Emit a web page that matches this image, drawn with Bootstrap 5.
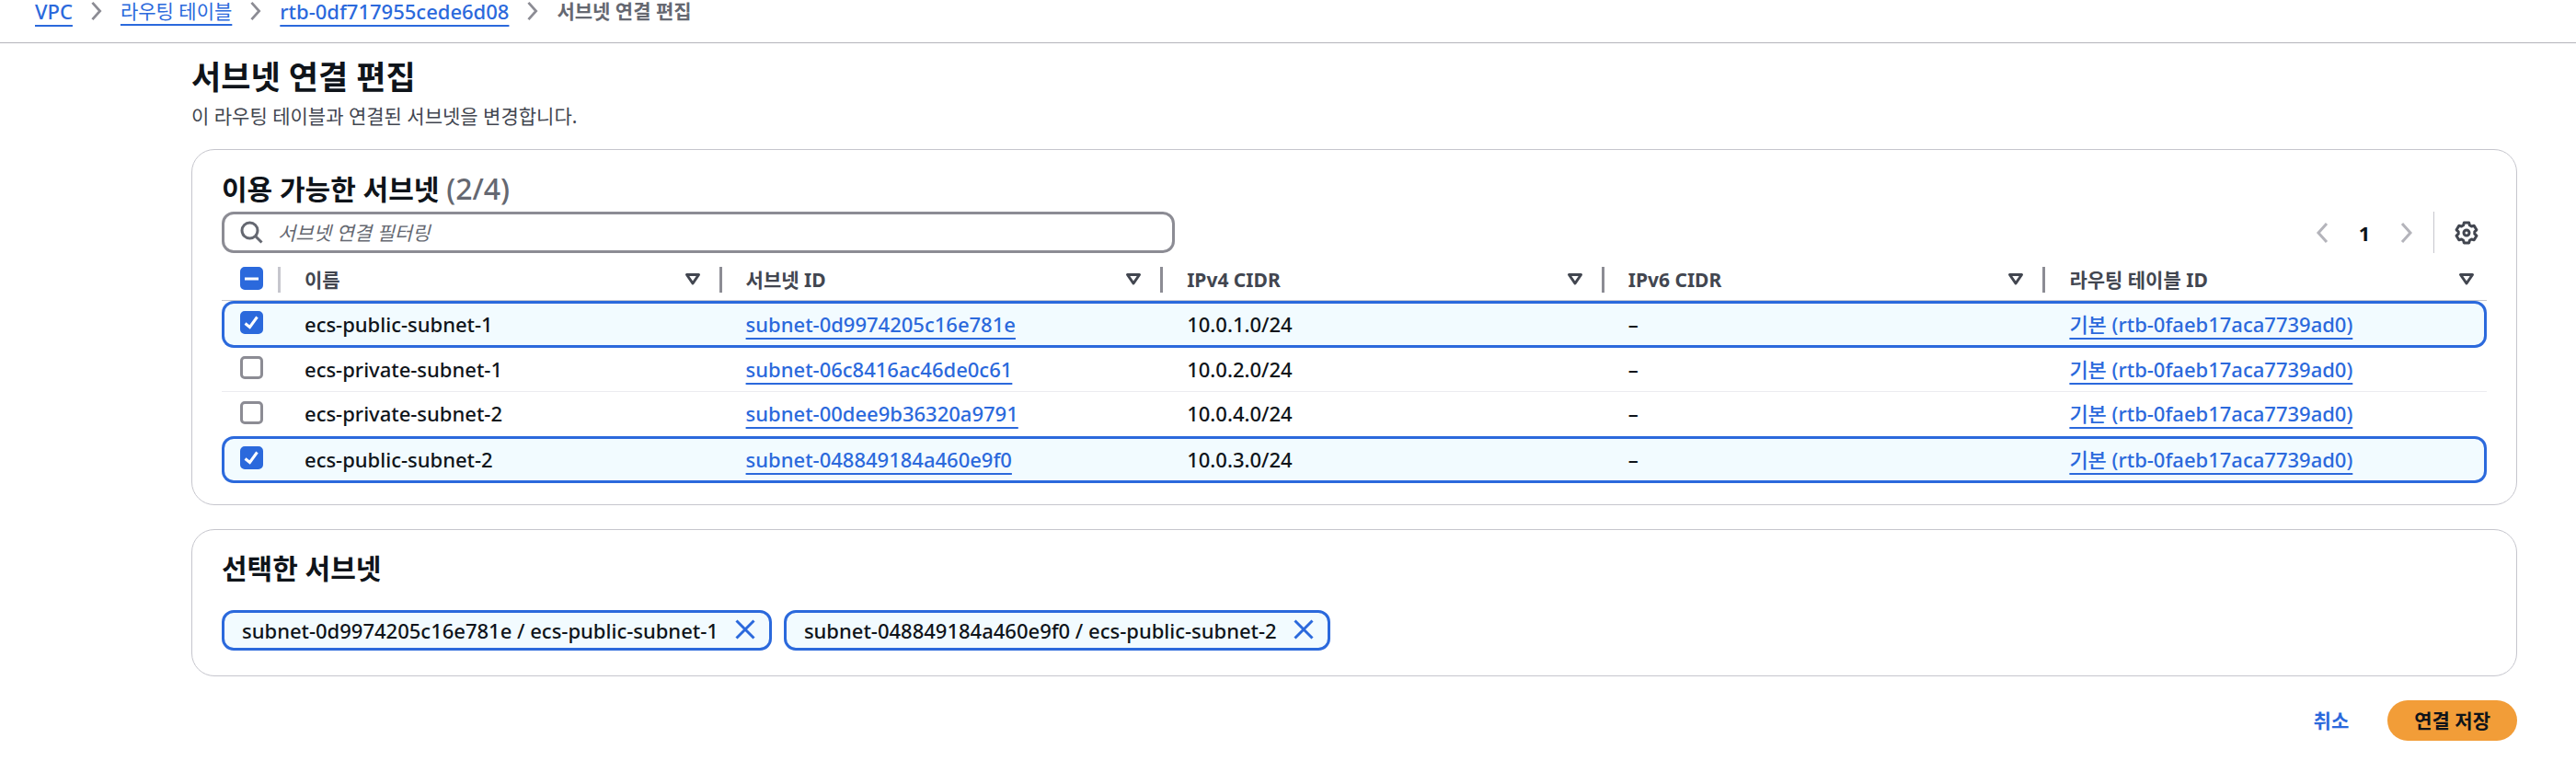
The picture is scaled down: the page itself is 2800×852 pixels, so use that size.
<!DOCTYPE html>
<html lang="ko">
<head>
<meta charset="utf-8">
<meta name="viewport" content="width=device-width, initial-scale=1">
<title>서브넷 연결 편집</title>
<link href="https://cdn.jsdelivr.net/npm/bootstrap@5.3.0/dist/css/bootstrap.min.css" rel="stylesheet">
<style>
  :root {
    --ink: #0f141a;
    --ink-soft: #424650;
    --ink-muted: #656871;
    --line: #c6c6cd;
    --line-strong: #8c8c94;
    --accent: #2b69dc;
    --accent-bg: #f2fbff;
  }
  body {
    font-family: "Noto Sans", "Noto Sans CJK KR", sans-serif;
    font-size: 22px;
    line-height: 32px;
    color: var(--ink);
    background: #fff;
  }
  a.ref {
    color: var(--accent);
    font-weight: 500;
    text-decoration: underline;
    text-decoration-thickness: 2px;
    text-underline-offset: 6px;
  }
  .crumbs { height: 47px; padding-left: 38px; border-bottom: 1px solid #b4b4bb; }
  .crumbs .breadcrumb { column-gap: 19px; margin-top: -4px; }
  .crumbs .breadcrumb-item { display: flex; align-items: center; gap: 19px; padding: 0; }
  .crumbs .breadcrumb-item::before { content: none; }
  .crumbs .active { color: var(--ink-muted); font-weight: 700; font-size: 21px; }
  .hangul { font-size: 21px; }
  a.hangul { font-weight: 400; }
  .page { padding: 16px 64px 48px 208px; }
  h1 { font-size: 35px; line-height: 42px; font-weight: 700; margin: 0; }
  .lede { font-size: 21px; color: var(--ink-soft); margin: 5px 0 20px; }
  .panel { border: 1px solid var(--line); border-radius: 25px; padding: 0 32px; margin-bottom: 26px; }
  h2 { font-size: 30px; line-height: 36px; font-weight: 700; margin: 0; padding-top: 24px; }
  h2 .tally { color: var(--ink-muted); font-weight: 500; font-size: 32px; }
  .search { width: 1036px; max-width: 60%; height: 45px; border: 3px solid var(--line-strong); border-radius: 13px; padding-left: 17px; gap: 16px; }
  .search input { border: 0; outline: 0; background: none; font-size: 21px; font-style: italic; color: var(--ink); padding: 0; }
  .search input::placeholder { color: var(--ink-muted); opacity: 1; }
  .toolbar { margin-top: 6px; }
  .icon-btn { border: 0; background: none; padding: 0; line-height: 0; color: inherit; }
  .pager .page-now { font-weight: 700; width: 78px; text-align: center; }
  .pager .icon-btn { color: #b4b4bb; }
  .pager .prefs { color: var(--ink-soft); border-left: 1px solid var(--line); height: 45px; padding: 0 9px 0 22px; margin-left: 22px; }

  .subnets { width: 100%; table-layout: fixed; border-collapse: separate; border-spacing: 0; margin-bottom: 23px; }
  .subnets th, .subnets td { padding: 0 0 0 26px; height: 48px; vertical-align: middle; }
  .subnets td { border-bottom: 1px solid #ebebf0; font-weight: 500; padding-bottom: 2px; }
  .subnets th { height: 52px; padding-top: 6px; border-bottom: 1px solid var(--line); color: var(--ink-soft); font-weight: 700; }
  .subnets .pick { width: 64px; padding-left: 20px; line-height: 0; }
  .subnets td.pick { padding-bottom: 4px; }
  .subnets .head { height: 28px; border-right: 3px solid var(--line-strong); padding-right: 20px; }
  .subnets .pick .head { border-color: var(--line); }
  .subnets th:last-child .head { border: 0; padding-right: 13px; }
  .subnets .chosen td { height: 51px; background: var(--accent-bg); border-top: 3px solid var(--accent); border-bottom: 3px solid var(--accent); }
  .subnets .chosen td:first-child { border-left: 3px solid var(--accent); border-radius: 13px 0 0 13px; padding-left: 17px; }
  .subnets .chosen td:last-child { border-right: 3px solid var(--accent); border-radius: 0 13px 13px 0; }
  .subnets .before-chosen td { border-bottom: 0; }
  .form-check-input { width: 25px; height: 25px; margin: 0; border: 3px solid var(--line-strong); background-size: 25px 25px; background-position: center; }
  .form-check-input[type=checkbox] { border-radius: 5px; }
  .form-check-input:checked, .form-check-input:indeterminate { background-color: var(--accent); border-color: var(--accent); }
  .form-check-input:checked[type=checkbox] { background-image: url("data:image/svg+xml,%3Csvg xmlns='http://www.w3.org/2000/svg' viewBox='0 0 25 25'%3E%3Cpath d='M5.500 13.500l5 4L18.500 6.500' fill='none' stroke='%23fff' stroke-width='3'/%3E%3C/svg%3E"); }
  .form-check-input[type=checkbox]:indeterminate { background-color: var(--accent); border-color: var(--accent); background-image: url("data:image/svg+xml,%3Csvg xmlns='http://www.w3.org/2000/svg' viewBox='0 0 25 25'%3E%3Cpath d='M5 13h15' stroke='%23fff' stroke-width='3'/%3E%3C/svg%3E"); }

  .chips { gap: 13px; margin: 27px 0; }
  .chip { height: 44px; border: 3px solid var(--accent); border-radius: 13px; background: var(--accent-bg); padding: 0 15px 0 19px; gap: 18px; font-weight: 500; }
  .chip .icon-btn { color: var(--accent); padding-bottom: 3px; }
  .actions { gap: 42px; }
  .actions .btn { font-size: 21px; font-weight: 700; line-height: 32px; border: 0; border-radius: 22px; height: 44px; padding: 6px 0; }
  .actions .cancel { color: var(--accent); }
  .actions .save { background: #f29d38; color: var(--ink); padding: 6px 29px; }
</style>
</head>
<body>
<svg class="d-none" aria-hidden="true">
  <symbol id="i-next" viewBox="0 0 14 24"><path d="M2 2l9 10-9 10" fill="none" stroke="currentColor" stroke-width="3"/></symbol>
  <symbol id="i-prev" viewBox="0 0 14 24"><path d="M12 2L3 12l9 10" fill="none" stroke="currentColor" stroke-width="3"/></symbol>
  <symbol id="i-sort" viewBox="0 0 18 15"><path d="M2.500 2.500h13L9 12z" fill="none" stroke="currentColor" stroke-width="3" stroke-linejoin="round"/></symbol>
  <symbol id="i-close" viewBox="0 0 22 22"><path d="M1.500 1.500l19 19M20.500 1.500l-19 19" fill="none" stroke="currentColor" stroke-width="3"/></symbol>
</svg>

<nav class="crumbs d-flex align-items-start" aria-label="breadcrumb">
  <ol class="breadcrumb mb-0">
    <li class="breadcrumb-item"><a class="ref" href="#">VPC</a><svg width="14" height="22"><use href="#i-next" color="#8c8c94"/></svg></li>
    <li class="breadcrumb-item"><a class="ref hangul" href="#">라우팅 테이블</a><svg width="14" height="22"><use href="#i-next" color="#8c8c94"/></svg></li>
    <li class="breadcrumb-item"><a class="ref" href="#">rtb-0df717955cede6d08</a><svg width="14" height="22"><use href="#i-next" color="#8c8c94"/></svg></li>
    <li class="breadcrumb-item active" aria-current="page">서브넷 연결 편집</li>
  </ol>
</nav>

<main class="page">
  <h1>서브넷 연결 편집</h1>
  <p class="lede">이 라우팅 테이블과 연결된 서브넷을 변경합니다.</p>

  <section class="panel">
    <h2>이용 가능한 서브넷 <span class="tally">(2/4)</span></h2>
    <div class="toolbar d-flex justify-content-between align-items-center">
      <label class="search d-flex align-items-center">
        <svg width="25" height="25" viewBox="0 0 25 25" fill="none" stroke="#656871" stroke-width="3"><circle cx="10.500" cy="10.500" r="8.500"/><path d="M16.500 16.500l7 7"/></svg>
        <input class="flex-grow-1" type="search" placeholder="서브넷 연결 필터링" aria-label="서브넷 연결 필터링">
      </label>
      <div class="pager d-flex align-items-center">
        <button class="icon-btn" type="button" aria-label="이전 페이지"><svg width="14" height="24"><use href="#i-prev"/></svg></button>
        <span class="page-now">1</span>
        <button class="icon-btn" type="button" aria-label="다음 페이지"><svg width="14" height="24"><use href="#i-next"/></svg></button>
        <button class="icon-btn prefs" type="button" aria-label="기본 설정"><svg width="26" height="26" viewBox="-13 -13 26 26" fill="none" stroke="currentColor" stroke-width="3" stroke-linejoin="round"><path d="M-2.700-11H2.700L3.400-8.200 5.400-7 8.200-7.800 10.900-3.200 8.800-1.200V1.200L10.900 3.200 8.200 7.800 5.400 7 3.400 8.200 2.700 11H-2.700L-3.400 8.200-5.400 7-8.200 7.800-10.900 3.200-8.800 1.200V-1.200L-10.900-3.200-8.200-7.800-5.400-7-3.400-8.200z"/><circle r="3"/></svg></button>
      </div>
    </div>

    <table class="subnets">
      <thead>
        <tr>
          <th class="pick" scope="col"><div class="head d-flex p-0"><input class="form-check-input" id="pick-all" type="checkbox" aria-label="모두 선택"></div></th>
          <th scope="col"><div class="head d-flex align-items-center justify-content-between"><span class="hangul">이름</span><svg width="18" height="15"><use href="#i-sort"/></svg></div></th>
          <th scope="col"><div class="head d-flex align-items-center justify-content-between"><span class="hangul">서브넷 ID</span><svg width="18" height="15"><use href="#i-sort"/></svg></div></th>
          <th scope="col"><div class="head d-flex align-items-center justify-content-between"><span class="hangul">IPv4 CIDR</span><svg width="18" height="15"><use href="#i-sort"/></svg></div></th>
          <th scope="col"><div class="head d-flex align-items-center justify-content-between"><span class="hangul">IPv6 CIDR</span><svg width="18" height="15"><use href="#i-sort"/></svg></div></th>
          <th scope="col"><div class="head d-flex align-items-center justify-content-between"><span class="hangul">라우팅 테이블 ID</span><svg width="18" height="15"><use href="#i-sort"/></svg></div></th>
        </tr>
      </thead>
      <tbody>
        <tr class="chosen">
          <td class="pick"><input class="form-check-input" type="checkbox" checked aria-label="ecs-public-subnet-1"></td>
          <td>ecs-public-subnet-1</td><td><a class="ref" href="#">subnet-0d9974205c16e781e</a></td><td>10.0.1.0/24</td><td>–</td><td><a class="ref" href="#">기본 (rtb-0faeb17aca7739ad0)</a></td>
        </tr>
        <tr>
          <td class="pick"><input class="form-check-input" type="checkbox" aria-label="ecs-private-subnet-1"></td>
          <td>ecs-private-subnet-1</td><td><a class="ref" href="#">subnet-06c8416ac46de0c61</a></td><td>10.0.2.0/24</td><td>–</td><td><a class="ref" href="#">기본 (rtb-0faeb17aca7739ad0)</a></td>
        </tr>
        <tr class="before-chosen">
          <td class="pick"><input class="form-check-input" type="checkbox" aria-label="ecs-private-subnet-2"></td>
          <td>ecs-private-subnet-2</td><td><a class="ref" href="#">subnet-00dee9b36320a9791</a></td><td>10.0.4.0/24</td><td>–</td><td><a class="ref" href="#">기본 (rtb-0faeb17aca7739ad0)</a></td>
        </tr>
        <tr class="chosen">
          <td class="pick"><input class="form-check-input" type="checkbox" checked aria-label="ecs-public-subnet-2"></td>
          <td>ecs-public-subnet-2</td><td><a class="ref" href="#">subnet-048849184a460e9f0</a></td><td>10.0.3.0/24</td><td>–</td><td><a class="ref" href="#">기본 (rtb-0faeb17aca7739ad0)</a></td>
        </tr>
      </tbody>
    </table>
  </section>

  <section class="panel">
    <h2>선택한 서브넷</h2>
    <div class="chips d-flex flex-wrap">
      <span class="chip d-inline-flex align-items-center">subnet-0d9974205c16e781e / ecs-public-subnet-1<button class="icon-btn" type="button" aria-label="ecs-public-subnet-1 제거"><svg width="22" height="22"><use href="#i-close"/></svg></button></span>
      <span class="chip d-inline-flex align-items-center">subnet-048849184a460e9f0 / ecs-public-subnet-2<button class="icon-btn" type="button" aria-label="ecs-public-subnet-2 제거"><svg width="22" height="22"><use href="#i-close"/></svg></button></span>
    </div>
  </section>

  <div class="actions d-flex justify-content-end">
    <button class="btn cancel" type="button">취소</button>
    <button class="btn save" type="button">연결 저장</button>
  </div>
</main>
<script src="https://cdn.jsdelivr.net/npm/bootstrap@5.3.0/dist/js/bootstrap.bundle.min.js"></script>
<script>
  document.getElementById('pick-all').indeterminate = true;
</script>
</body>
</html>
